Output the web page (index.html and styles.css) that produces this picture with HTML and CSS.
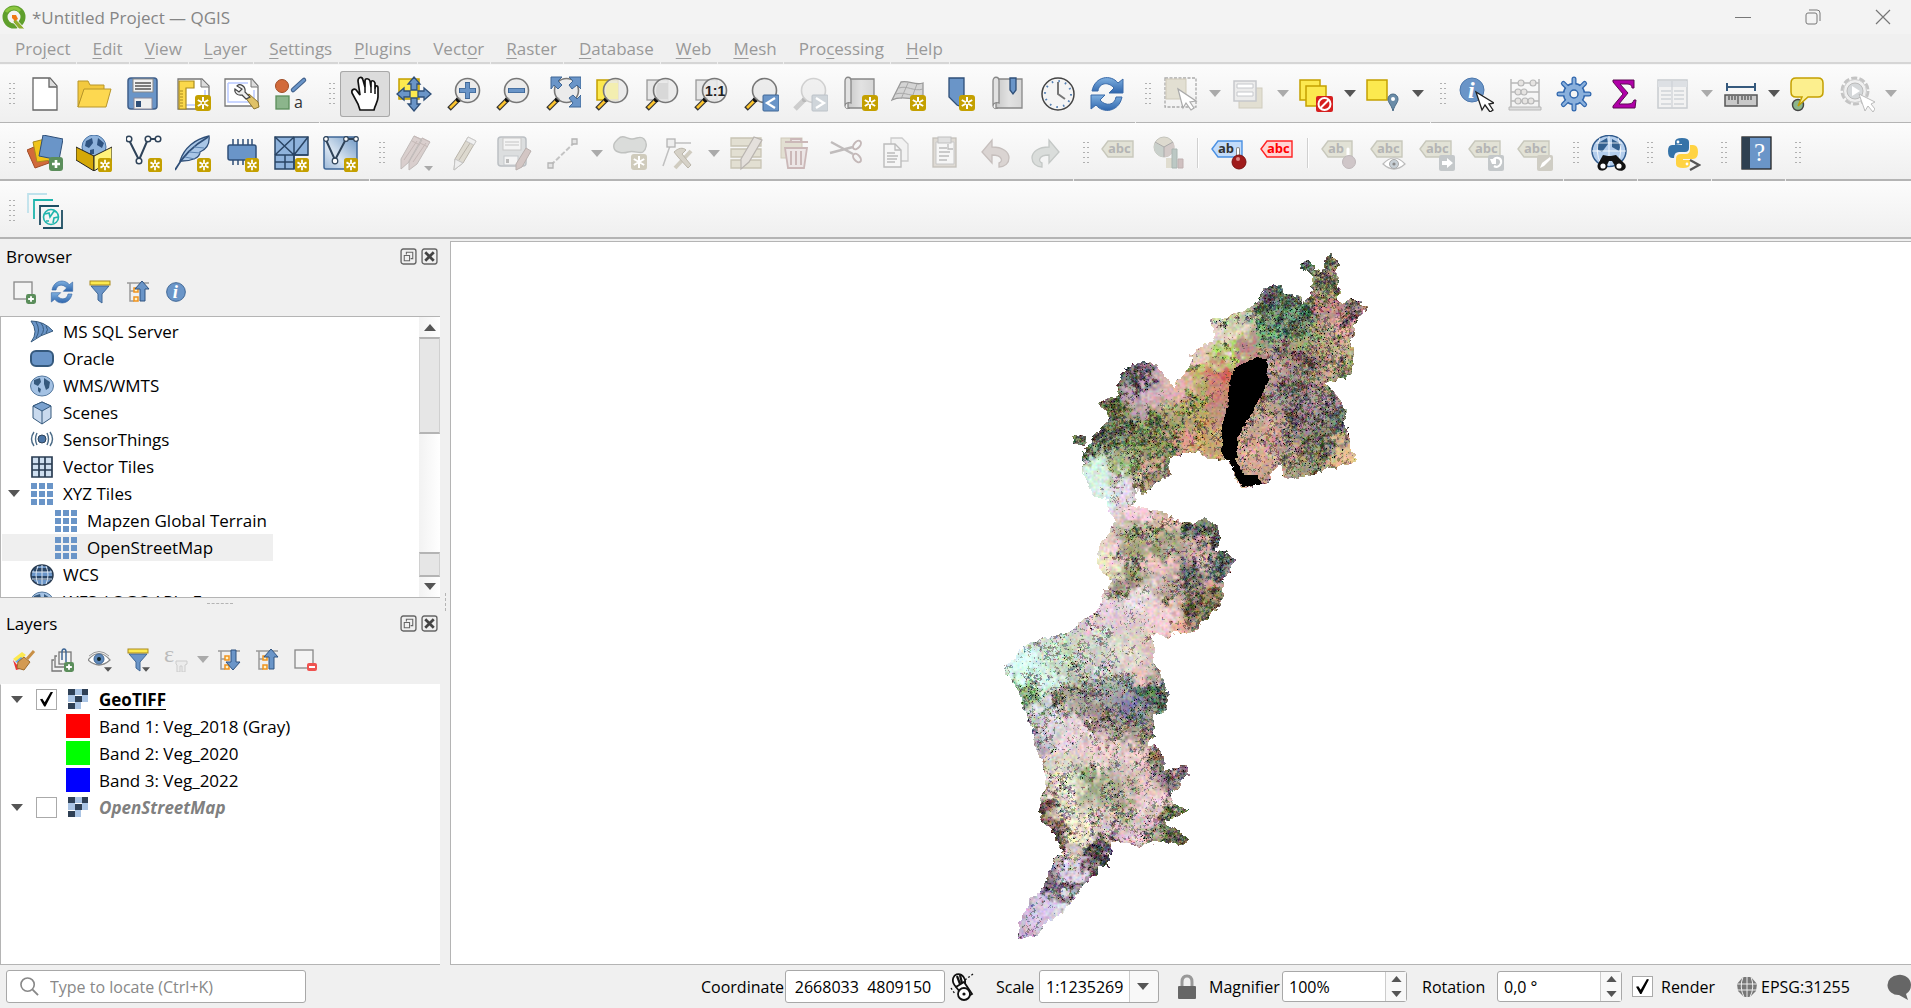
FILE: index.html
```html
<!DOCTYPE html>
<html lang="en">
<head>
<meta charset="utf-8">
<title>*Untitled Project — QGIS</title>
<link rel="stylesheet" href="styles.css">
</head>
<body>
<svg class="paints" aria-hidden="true">
<defs>
<linearGradient id="gBlue" x1="0" y1="0" x2="0" y2="1"><stop offset="0" stop-color="#7fb0e0"/><stop offset="1" stop-color="#2f66ad"/></linearGradient>
<linearGradient id="gPale" x1="1" y1="0" x2="0" y2="1"><stop offset="0" stop-color="#6d97c4"/><stop offset=".6" stop-color="#dbe6f2"/><stop offset="1" stop-color="#9db9d8"/></linearGradient>
<linearGradient id="gGrey" x1="0" y1="0" x2="1" y2="0"><stop offset="0" stop-color="#c8c8c8"/><stop offset=".5" stop-color="#e2e2e2"/><stop offset="1" stop-color="#d6d6d6"/></linearGradient>
</defs>
</svg>
<svg class="symbols" aria-hidden="true">
<symbol id="star" viewBox="0 0 16 16"><rect width="16" height="16" rx="3" fill="#c4a000"/><path d="M8 2v12M2.8 5l10.400 6M13.200 5L2.800 11" stroke="#fff" stroke-width="2"/><circle cx="8" cy="8" r="1.300" fill="#c4a000"/></symbol>
<symbol id="arrow" viewBox="0 0 12 7"><path d="M0 0h12L6 7z" fill="currentColor"/></symbol>
<symbol id="glass" viewBox="0 0 36 36"><path d="M3 33l9-9" stroke="#333" stroke-width="5"/><path d="M4 32l7-7" stroke="#fcc52f" stroke-width="2.600"/><circle cx="12.500" cy="23.500" r="2.600" fill="#111"/><circle cx="21.500" cy="14.500" r="12" fill="#e9e9e9" fill-opacity=".88" stroke="#777" stroke-width="1.600"/></symbol>
<symbol id="pencil" viewBox="0 0 36 36"><path d="M9 24L22 2l8 4-13 22-9 7z" fill="#ddd9cf" stroke="#b9b4aa"/><path d="M20 6l8 4M13 25L26 5" stroke="#b9b4aa" fill="none"/><path d="M22 2l8 4-2 4-8-4z" fill="#f0f0f0" stroke="#ccc"/><path d="M9 24l8 4-9 7z" fill="#eee" stroke="#c4c4c4"/></symbol>
<symbol id="tagbase" viewBox="0 0 36 36"><path d="M1 10l6-8h25v16H7z" fill="#e2e2d6" stroke="#c8c8bc" stroke-width="1.400"/><text x="7" y="14" class="tagtext" fill="#b4b4b4">abc</text></symbol>
<symbol id="tag" viewBox="0 -4 36 36"><use href="#tagbase" width="36" height="36"/></symbol>
<symbol id="doc" viewBox="0 0 36 36"><path d="M6 2h17l7 8v24H6z" fill="#fff" stroke="#666" stroke-width="1.300"/><path d="M22 2v9h8" fill="#ddd" stroke="#666" stroke-width="1.300"/></symbol>
<symbol id="folder" viewBox="0 0 36 36"><path d="M2 31V5h10l2 4h14v6H8z" fill="#f3c93f" stroke="#b8962a"/><path d="M8 13h27l-5 18H2z" fill="#fdd850" stroke="#b8962a"/></symbol>
<symbol id="save" viewBox="0 0 36 36"><rect x="3" y="2" width="29" height="31" rx="3" fill="#6a95c8" stroke="#3f5f8a" stroke-width="1.500"/><rect x="8" y="3" width="20" height="13" fill="#f2f2f2" stroke="#888"/><path d="M10 7h16M10 10h16M10 13h16" stroke="#555" stroke-width="1.400"/><rect x="9" y="22" width="18" height="11" fill="#f0f0f0" stroke="#889"/><rect x="11" y="25" width="5" height="6" fill="#2f4f78"/></symbol>
<symbol id="layout" viewBox="0 0 36 36"><path d="M3 3h24l7 7v23H3z" fill="#fff" stroke="#777" stroke-width="1.300"/><path d="M26 3v8h8" fill="#ddd" stroke="#777"/><path d="M30 14v15H8" fill="none" stroke="#b9c9ff" stroke-width="1.500"/><path d="M4 5h15v7h-8v21H4z" fill="#fbd84b" stroke="#a98a1e" stroke-width="1.200"/><path d="M5 15h3M5 18h3M5 21h3M5 24h3M5 27h3M5 30h3" stroke="#a98a1e"/><use href="#star" x="20" y="19" width="16" height="16"/></symbol>
<symbol id="wrench" viewBox="0 0 36 36"><path d="M1 3h27l6 7v20H1z" fill="#fff" stroke="#777" stroke-width="1.300"/><path d="M27 3v8h7" fill="#ddd" stroke="#777"/><path d="M4 7h20M4 7v19h26V14" fill="none" stroke="#b9c9ff" stroke-width="1.500"/><path d="M21 21l9 12 5-2-1-5-9-8z" fill="#e0c268" stroke="#8b7530"/><path d="M13 10c3-3 9 0 8 6l5 5-4 2-4-4c-4 1-8-2-7-6l4 3 3-3z" fill="#eee" stroke="#444" stroke-width="1.200"/></symbol>
<symbol id="style" viewBox="0 0 36 36"><circle cx="9" cy="10" r="6.500" fill="#d26a3a" stroke="#a04c26"/><path d="M20 14L31 4" stroke="#3f5f8a" stroke-width="4.500" stroke-linecap="round"/><path d="M20 14L31 4" stroke="#6a95c8" stroke-width="2.500" stroke-linecap="round"/><rect x="3" y="20" width="13" height="13" fill="#8cb58c" stroke="#5b8e5b" stroke-width="1.300"/><text x="21" y="32" class="letter">a</text></symbol>
<symbol id="hand" viewBox="0 0 36 36"><path d="M13 34L11 28 5 17C4 13 8 12 10 15L13 19 11 5C11 1 15 0 16 4L18 11 18 5C18 2 22 2 23 5L24 11V7C24 4 27 4 28 7V13C28 9 31 9 31 12V21C31 26 28 29 27 34z" fill="#fff" stroke="#111" stroke-width="1.700"/><path d="M18 11v6M24 11v6M28 13v5" stroke="#111" stroke-width="1.500"/></symbol>
<symbol id="panall" viewBox="0 0 36 36"><rect x="3" y="3" width="20" height="20" fill="#fce94f" stroke="#c4a000" stroke-width="1.500"/><path d="M18 1l6 7h-3v6h-6V8h-3zM18 35l6-7h-3v-6h-6v6h-3zM1 18l7-6v3h6v6H8v3zM35 18l-7-6v3h-6v6h6v3z" fill="#6a95c8" stroke="#2f4f78" stroke-width="1.300"/></symbol>
<symbol id="zin" viewBox="0 0 36 36"><use href="#glass"/><path d="M21.500 6v17M13 14.500h17" stroke="#3f6796" stroke-width="5"/><path d="M21.500 7v15M14 14.500h15" stroke="#6a95c8" stroke-width="3.500"/></symbol>
<symbol id="zout" viewBox="0 0 36 36"><use href="#glass"/><path d="M13 14.500h17" stroke="#3f6796" stroke-width="5"/><path d="M14 14.500h15" stroke="#6a95c8" stroke-width="3.500"/></symbol>
<symbol id="zfull" viewBox="0 0 36 36"><use href="#glass"/><path d="M6 1h11l-4 4 4 4-4 4-4-4-3 4zM36 1v12l-4-4-5 4-3-4 4-4-4-4zM36 31H24l4-4-4-5 4-3 4 4 4-4z" fill="#6a95c8" stroke="#3f6796"/></symbol>
<symbol id="zsel" viewBox="0 0 36 36"><rect x="3" y="4" width="21" height="20" fill="#fce94f" stroke="#c4a000" stroke-width="1.500"/><use href="#glass"/><path d="M14 7h10v16h-10q-4-8 0-16z" fill="#f3eeb0"/></symbol>
<symbol id="zlay" viewBox="0 0 36 36"><rect x="3" y="4" width="21" height="20" fill="#e6e6e6" stroke="#999" stroke-width="1.300"/><use href="#glass"/><path d="M14 7h10v16h-10q-4-8 0-16z" fill="#d8d8d8"/></symbol>
<symbol id="znat" viewBox="0 0 36 36"><rect x="3" y="4" width="21" height="20" fill="#e6e6e6" stroke="#999" stroke-width="1.300"/><use href="#glass"/><text x="12" y="20" class="native">1:1</text></symbol>
<symbol id="zlast" viewBox="0 0 36 36"><use href="#glass"/><rect x="20" y="19" width="16" height="16" rx="1" fill="#6a95c8" stroke="#3f6796"/><path d="M32 22l-8 5 8 5" stroke="#fff" stroke-width="2.300" fill="none"/></symbol>
<symbol id="znext" viewBox="0 0 36 36"><g opacity=".3"><path d="M3 33l9-9" stroke="#777" stroke-width="5"/><circle cx="12.500" cy="23.500" r="2.600" fill="#333"/><circle cx="21.500" cy="14.500" r="12" fill="#e0e0e0" stroke="#777" stroke-width="1.600"/></g><rect x="20" y="19" width="16" height="16" rx="1" fill="#cfd5da" stroke="#bcc2c8"/><path d="M24 22l8 5-8 5" stroke="#fff" stroke-width="2.300" fill="none"/></symbol>
<symbol id="mapnew" viewBox="0 0 36 36"><path d="M6 3h26v29H6z" fill="url(#gGrey)" stroke="#888" stroke-width="1.300"/><path d="M3 5c0-5 6-5 6 0v22c-3-1-6 0-6 3z" fill="#e2e2e2" stroke="#888" stroke-width="1.300"/><path d="M3 30c0 3 3 3 5 2" stroke="#888" fill="none"/></symbol>
<symbol id="scene" viewBox="0 0 36 36"><path d="M1 24L10 6c8-2 14 4 22 1v15c-10 4-20-4-31 2z" fill="#d4d4d4" stroke="#999" stroke-width="1.300"/><path d="M8 12c8-3 15 4 24 1M5 18c8-3 17 4 27 1M17 7l-7 16M26 8l-6 16" stroke="#a8a8a8" fill="none"/></symbol>
<symbol id="bmnew" viewBox="0 0 36 36"><path d="M8 2h15v30l-7-3-8-8z" fill="#6a95c8" stroke="#2f4f78" stroke-width="1.300"/></symbol>
<symbol id="bms" viewBox="0 0 36 36"><use href="#mapnew"/><path d="M20 2h6v12l-3 4-3-4z" fill="#6a95c8" stroke="#2f4f78" stroke-width="1.300"/></symbol>
<symbol id="clock" viewBox="0 0 36 36"><circle cx="18" cy="18" r="16" fill="#f4f4f4" stroke="#444" stroke-width="1.500"/><circle cx="18" cy="18" r="13" fill="none" stroke="#5580b4" stroke-width="2" stroke-dasharray="1.600 5.206"/><path d="M18 6v12l7 5" stroke="#777" stroke-width="2" fill="none"/></symbol>
<symbol id="refresh" viewBox="0 0 36 36"><path d="M3 15C6 0 22-2 29 7l5-4v14H20l5-5c-6-7-15-5-16 3z" fill="url(#gBlue)" stroke="#3a6aa8"/><path d="M33 21C30 36 14 38 7 29l-5 4V19h14l-5 5c6 7 15 5 16-3z" fill="url(#gBlue)" stroke="#3a6aa8"/></symbol>
<symbol id="select" viewBox="0 0 36 36"><rect x="2" y="2" width="31" height="29" fill="none" stroke="#aaa" stroke-width="1.300" stroke-dasharray="3 1.500"/><rect x="3" y="3" width="20" height="20" fill="#e2dfd2" stroke="#cfcaba"/><path d="M15 13l5 19 3-5 5 7 3-2-4-6 6-1z" fill="#fff" stroke="#aaa" stroke-width="1.200"/></symbol>
<symbol id="form" viewBox="0 0 36 36"><rect x="8" y="12" width="23" height="20" fill="#e2dfd2" stroke="#d0ccbe"/><rect x="3" y="5" width="22" height="20" fill="#ececec" stroke="#c6c8cc" stroke-width="1.500"/><path d="M6 8h16v4H6zM6 16h16v4H6z" fill="#fff" stroke="#c6c8cc"/></symbol>
<symbol id="desel" viewBox="0 0 36 36"><rect x="2" y="4" width="20" height="20" fill="#fce94f" stroke="#c4a000" stroke-width="1.500"/><rect x="8" y="10" width="20" height="20" fill="#fce94f" stroke="#c4a000" stroke-width="1.500"/><rect x="18" y="20" width="17" height="16" rx="2" fill="#d61f1f"/><circle cx="26.500" cy="28" r="6" fill="none" stroke="#fff" stroke-width="2"/><path d="M22.500 32l8-8" stroke="#fff" stroke-width="2"/></symbol>
<symbol id="selloc" viewBox="0 0 36 36"><rect x="1" y="4" width="20" height="20" fill="#fce94f" stroke="#c4a000" stroke-width="1.500"/><path d="M27 35c-2-7-5-8-5-12a5 5 0 0 1 10 0c0 4-3 5-5 12z" fill="#6a8ca8" stroke="#4a6a86"/><circle cx="27" cy="23" r="2" fill="#fff"/></symbol>
<symbol id="info" viewBox="0 0 36 36"><circle cx="18" cy="18" r="14" fill="#6a95c8" stroke="#3f6796" stroke-width="1.500"/><text x="13" y="27" class="infoi">i</text></symbol>
<symbol id="identify" viewBox="0 0 36 36"><circle cx="14" cy="14" r="12" fill="#6a95c8" stroke="#4d78ad"/><text x="10" y="22" class="infos">i</text><path d="M18 16l6 18 3-5 5 7 3-2-4-6 5-1z" fill="#fff" stroke="#222" stroke-width="1.300"/></symbol>
<symbol id="abacus" viewBox="0 0 36 36"><path d="M4 3v29M32 3v29M4 7h28M4 16h28M4 25h28" stroke="#b8b8b8" stroke-width="1.500"/><path d="M2 31h32v3H2z" fill="#ddd" stroke="#b8b8b8"/><g fill="#e6e4e2" stroke="#b8b8b8" stroke-width="1.200"><circle cx="14" cy="7" r="3"/><circle cx="26" cy="7" r="3"/><circle cx="11" cy="16" r="3"/><circle cx="17" cy="16" r="3"/><circle cx="11" cy="25" r="3"/><circle cx="18" cy="25" r="3"/><circle cx="24" cy="25" r="3"/></g></symbol>
<symbol id="gear" viewBox="0 0 36 36"><path d="M18 3v30M3 18h30M7.400 7.400l21.200 21.200M28.600 7.400L7.400 28.600" stroke="#2f66ad" stroke-width="5" stroke-linecap="round"/><circle cx="18" cy="18" r="10.500" fill="#8ab0dc" stroke="#2f66ad" stroke-width="1.500"/><path d="M18 3v30M3 18h30M7.400 7.400l21.200 21.200M28.600 7.400L7.400 28.600" stroke="#8ab0dc" stroke-width="2.600" stroke-linecap="round"/><circle cx="18" cy="18" r="4" fill="#f4f4f4" stroke="#2f66ad" stroke-width="1.500"/></symbol>
<symbol id="sigma" viewBox="0 0 36 36"><path d="M7 4h21v8h-2c0-3-2-4-5-4h-7l8 9-9 11h9c3 0 5-1 6-4h2l-1 8H7v-2l10-12L7 6z" fill="#b000a8" stroke="#5c0a52"/></symbol>
<symbol id="attrs" viewBox="0 0 36 36"><rect x="3" y="4" width="29" height="28" fill="#f2f2f2" stroke="#c8ccd0" stroke-width="1.500"/><path d="M3 5h29v6H3z" fill="#dde0e4"/><path d="M6 15h10M19 15h10M6 19h10M19 19h10M6 23h10M19 23h10M6 28h10M19 28h10M17 5v27" stroke="#cfd3d7" stroke-width="1.300"/></symbol>
<symbol id="ruler" viewBox="0 0 36 36"><path d="M4 11h28M4 7v8M32 7v8" stroke="#35597d" stroke-width="2"/><rect x="2" y="19" width="32" height="11" fill="#c9c9c9" stroke="#555" stroke-width="1.500"/><path d="M6 20v4M9 20v4M12 20v4M15 20v8M19 20v4M22 20v4M25 20v4M28 20v4" stroke="#555" stroke-width="1.300"/></symbol>
<symbol id="tips" viewBox="0 0 36 36"><circle cx="8" cy="29" r="5.500" fill="#8cb58c" stroke="#444" stroke-width="1.400"/><path d="M6 2h22q5 0 5 5v9q0 5-5 5H18l-10 9 4-9H6q-5 0-5-5V7q0-5 5-5z" fill="#fcef8e" stroke="#c4a000" stroke-width="1.500"/></symbol>
<symbol id="action" viewBox="0 0 36 36"><circle cx="16" cy="15" r="13" fill="none" stroke="#c4c4c4" stroke-width="3" stroke-dasharray="6 2.160"/><circle cx="16" cy="15" r="11.500" fill="#f0f0f0" stroke="#ccc"/><circle cx="16" cy="15" r="8" fill="#d5d8da" stroke="#bbb"/><path d="M13 10l8 5-8 5z" fill="#fff"/><path d="M20 18l6 17 3-5 5 6 2-3-4-5 4-2z" fill="#fff" stroke="#bbb"/></symbol>
<symbol id="plus" viewBox="0 0 14 14"><rect width="14" height="14" rx="3" fill="#5b8e5b"/><path d="M7 3v8M3 7h8" stroke="#fff" stroke-width="2.600"/></symbol>
<symbol id="source" viewBox="0 0 36 36"><path d="M0 15l14-6 8 19-14 5z" fill="#d26a3a" stroke="#a04c26"/><path d="M6 7l12-3 6 21-14 2z" fill="#f0c419" stroke="#a98a1e"/><path d="M16 0l20 4-4 21-20-4z" fill="#6a95c8" stroke="#2f4f78"/><use href="#plus" x="22" y="22" width="14" height="14"/></symbol>
<symbol id="geopkg" viewBox="0 0 36 36"><circle cx="18" cy="12" r="12" fill="#8fb3dc" stroke="#4b75a6"/><path d="M10 6l6-3 1 5-4 5-4-2zM22 3l6 5-2 5-5-3zM14 15l4-1v5h-4z" fill="#2f5380"/><path d="M0 12l18 9v15L0 25z" fill="#d5a806" stroke="#222"/><path d="M36 12l-18 9v15l18-11z" fill="#fff27a" stroke="#222"/></symbol>
<symbol id="shape" viewBox="0 0 36 36"><path d="M3 5l10 20L22 4h10" fill="none" stroke="#2f4359" stroke-width="2"/><g fill="#fff" stroke="#2f4359" stroke-width="1.500"><circle cx="3" cy="4" r="2.800"/><circle cx="13" cy="26" r="2.800"/><circle cx="22" cy="4" r="2.800"/><circle cx="32" cy="4" r="2.800"/></g></symbol>
<symbol id="feather" viewBox="0 0 36 36"><path d="M5 26C9 13 20 4 34 1c1 9-4 14-9 16 0 6-9 9-18 9z" fill="#a9c6e6" stroke="#2f4f78" stroke-width="1.300"/><path d="M0 35C7 22 16 12 33 2" fill="none" stroke="#2f4f78" stroke-width="1.800"/><path d="M10 22l10 2M14 17l11 1M19 12l10 1" stroke="#5d85b2"/></symbol>
<symbol id="chip" viewBox="0 0 36 36"><path d="M9 4v7M14 4v7M19 4v7M24 4v7M28 4v7M9 25v5M14 25v5M19 25v5" stroke="#2f4f78" stroke-width="1.500"/><rect x="4" y="10" width="28" height="15" rx="2" fill="#6a95c8" stroke="#2f4f78" stroke-width="1.500"/></symbol>
<symbol id="mesh" viewBox="0 0 36 36"><path d="M1 2h33v18H20v14H1z" fill="#8fb3dc" stroke="#2a4565" stroke-width="1.500"/><path d="M1 20h33M20 2v32M1 2l19 18M20 2L1 20M34 2L20 20M11 20v14M1 27h19" stroke="#2a4565" stroke-width="1.500"/></symbol>
<symbol id="vlayer" viewBox="0 0 36 36"><rect x="1" y="2" width="33" height="32" rx="2" fill="url(#gPale)" stroke="#3f6796" stroke-width="1.500"/><path d="M3 5l9 20L23 4h9" fill="none" stroke="#2f4359" stroke-width="2"/><g fill="#fff" stroke="#2f4359" stroke-width="1.200"><circle cx="3" cy="4" r="2.300"/><circle cx="12" cy="26" r="2.800"/><circle cx="23" cy="4" r="2.300"/><circle cx="33" cy="4" r="2.300"/></g></symbol>
<symbol id="pencils" viewBox="0 0 36 36"><g opacity=".8"><path d="M4 24L17 1l8 4-13 22-8 7zM12 26L25 3l8 4-13 22-8 6z" fill="#d3c6c4" stroke="#b4adab"/><path d="M17 1l7 3M15 6l8 4M25 3l8 4M23 8l8 4M7 25L20 6M16 27L29 8" stroke="#b9a9a7" fill="none"/></g><path d="M27 31h9l-4 5z" fill="#aaa"/></symbol>
<symbol id="saveed" viewBox="0 0 36 36"><rect x="2" y="2" width="28" height="29" rx="3" fill="#dcdedf" stroke="#bcc0c4" stroke-width="1.500"/><rect x="7" y="3" width="18" height="12" fill="#f4f4f4" stroke="#c8c8c8"/><path d="M9 7h14M9 10h14" stroke="#c4c4c4"/><rect x="8" y="21" width="14" height="9" fill="#f4f4f4" stroke="#c4c8cc"/><path d="M10 24h3v4h-3z" fill="#bbb"/><path d="M20 29L30 13l5 3-9 16-6 3z" fill="#d3c6c4" stroke="#b9b0ae"/></symbol>
<symbol id="line" viewBox="0 0 36 36"><path d="M6 30L30 7" stroke="#c4c4c4" stroke-width="2" stroke-dasharray="5 2"/><path d="M3 28h5v5H3zM27 4h5v5h-5z" fill="#e4e4e4" stroke="#b4b4b4" stroke-width="1.300"/></symbol>
<symbol id="starg" viewBox="0 0 16 16"><rect width="16" height="16" rx="3" fill="#cfcbbc"/><path d="M8 2v12M2.800 5l10.400 6M13.200 5L2.800 11" stroke="#fff" stroke-width="2"/></symbol>
<symbol id="blob" viewBox="0 0 36 36"><path d="M5 4c5-5 9 0 14 0s8-4 12 0 2 11-1 13-9-2-15 0S2 17 1 13s1-6 4-9z" fill="#dadcda" stroke="#c0c2c0" stroke-width="1.400"/><use href="#starg" x="18" y="19" width="16" height="16"/></symbol>
<symbol id="vertex" viewBox="0 0 36 36"><path d="M1 31L9 8h20" stroke="#c0c0c0" stroke-width="1.500" fill="none"/><rect x="5" y="4" width="8" height="8" fill="#eee" stroke="#b4b4b4" stroke-width="1.300"/><path d="M13 33l16-17" stroke="#d0ccc0" stroke-width="4"/><path d="M12 17c4-4 9-5 12-2l-4 4 9 11-3 3-10-11z" fill="#d6d2c8" stroke="#bbb6aa"/></symbol>
<symbol id="fields" viewBox="0 0 36 36"><path d="M1 3h30v8H1zM1 14h30v8H1zM1 25h30v8H1z" fill="#e2dfd2" stroke="#c8c4b4" stroke-width="1.300"/><path d="M11 24L24 2l8 3-13 22-8 7z" fill="#e4e0dc" stroke="#b9b4b0" stroke-width="1.200"/></symbol>
<symbol id="trash" viewBox="0 0 36 36"><rect x="2" y="3" width="21" height="20" fill="#e2dfd2" stroke="#cfcaba"/><path d="M6 7h23M12 6V4h10v2M6 13h22l-3 20H9z" fill="#ece6e6" stroke="#cbb8b8" stroke-width="1.800"/><path d="M12 16v14M17 16v14M22 16v14" stroke="#cbb8b8" stroke-width="2"/></symbol>
<symbol id="cut" viewBox="0 0 36 36"><path d="M2 7l22 12M1 18l23-6" stroke="#c0bcbc" stroke-width="2.500"/><ellipse cx="28" cy="10" rx="3" ry="5" transform="rotate(40 28 10)" fill="none" stroke="#c4b8b8" stroke-width="2"/><ellipse cx="28" cy="23" rx="3" ry="5" transform="rotate(-40 28 23)" fill="none" stroke="#c4b8b8" stroke-width="2"/></symbol>
<symbol id="copy" viewBox="0 0 36 36"><path d="M12 3h11l6 6v17H12z" fill="#f2f2f2" stroke="#ccc" stroke-width="1.300"/><path d="M5 9h11l6 6v17H5z" fill="#f6f6f6" stroke="#bcbcbc" stroke-width="1.400"/><path d="M16 9v6h6M8 18h8M8 21h11M8 24h10M8 27h8" stroke="#bcbcbc" stroke-width="1.300" fill="none"/></symbol>
<symbol id="paste" viewBox="0 0 36 36"><rect x="5" y="3" width="23" height="29" fill="#dedad4" stroke="#c4c0ba" stroke-width="1.300"/><path d="M8 7h18v22H8z" fill="#f6f6f6" stroke="#c8c8c8"/><rect x="10" y="2" width="13" height="6" fill="#e0e0e0" stroke="#c0c0c0"/><path d="M11 13h8M11 17h11M11 21h10M11 25h8M20 9v5h5" stroke="#bcbcbc" stroke-width="1.300" fill="none"/></symbol>
<symbol id="undo" viewBox="0 0 36 36"><path d="M4 17L14 5v7c11 0 17 5 17 11 0 5-4 9-10 9v-4c4-1 4-8-7-8v8z" fill="#dad4d2" stroke="#c6bfbd" stroke-width="1.300"/></symbol>
<symbol id="redo" viewBox="0 0 36 36"><path d="M32 17L22 5v7C11 12 5 17 5 23c0 5 4 9 10 9v-4c-4-1-4-8 7-8v8z" fill="#dadddb" stroke="#c4c8c6" stroke-width="1.300"/></symbol>
<symbol id="diagram" viewBox="0 0 36 36"><circle cx="14" cy="12" r="10" fill="#dddacf" stroke="#c4c4bc"/><path d="M14 12v10a10 10 0 0 1-9-14z" fill="#c9d0cb"/><path d="M14 12l9-5a10 10 0 0 1-9 15z" fill="#d3cac8"/><path d="M14 12v10M14 12L5 7M14 12l9-5" stroke="#aaa"/><path d="M16 23h6v10h-6z" fill="#e0ddd0"/><path d="M22 14h5v19h-5z" fill="#bcc8c4" stroke="#aab6b2"/><path d="M28 24h5v9h-5z" fill="#cfc0c0" stroke="#bfb0b0"/></symbol>
<symbol id="pinab" viewBox="0 -2 36 36"><path d="M1 12l6-8h24v16H7z" fill="#c3dcfa" stroke="#4a90e2" stroke-width="1.400"/><text x="7" y="16" class="tagtext" fill="#333">ab</text><path d="M27 12v10" stroke="#888" stroke-width="4" stroke-linecap="round"/><path d="M27 12v9" stroke="#fff" stroke-width="2" stroke-linecap="round"/><circle cx="28" cy="25" r="7" fill="#a01c1c" stroke="#7a1010"/><circle cx="27" cy="22" r="2" fill="#d88"/></symbol>
<symbol id="redabc" viewBox="0 -2 36 36"><path d="M1 12l6-8h25v16H7z" fill="#ffd5d5" stroke="#f22" stroke-width="1.400"/><text x="7" y="16" class="tagtext" fill="#f00">abc</text></symbol>
<symbol id="pinoff" viewBox="0 -4 36 36"><path d="M1 10l6-8h24v16H7z" fill="#e2e2d6" stroke="#c8c8bc" stroke-width="1.400"/><text x="7" y="14" class="tagtext" fill="#b4b4b4">ab</text><path d="M27 10v9" stroke="#fff" stroke-width="3" stroke-linecap="round"/><circle cx="28" cy="23" r="6.500" fill="#cfc6c8" stroke="#bfb8ba"/></symbol>
<symbol id="eyeoff" viewBox="0 -4 36 36"><use href="#tagbase" width="36" height="36"/><path d="M13 25q11-12 22 0-11 10-22 0z" fill="#fff" stroke="#bbb" stroke-width="1.200"/><circle cx="24" cy="25" r="4.500" fill="#c8d0d6" stroke="#aaa"/><circle cx="24" cy="25" r="1.600" fill="#888"/></symbol>
<symbol id="moveoff" viewBox="0 -4 36 36"><use href="#tagbase" width="36" height="36"/><rect x="20" y="16" width="16" height="16" rx="2" fill="#c4c8ca"/><path d="M23 22h5v-3l6 5-6 5v-3h-5z" fill="#fff"/></symbol>
<symbol id="rotoff" viewBox="0 -4 36 36"><use href="#tagbase" width="36" height="36"/><rect x="20" y="16" width="16" height="16" rx="2" fill="#c4c8ca"/><path d="M25 22c1-5 9-4 8 2-1 3-4 5-7 3" stroke="#fff" stroke-width="2.200" fill="none"/><path d="M22 20h6v5h-4z" fill="#fff"/></symbol>
<symbol id="editoff" viewBox="0 -4 36 36"><use href="#tagbase" width="36" height="36"/><rect x="20" y="16" width="16" height="16" rx="2" fill="#cfcdc4"/><path d="M23 29l2-5 8-6 1 2-7 7z" fill="#fff"/></symbol>
<symbol id="metaglobe" viewBox="0 0 36 36"><ellipse cx="18" cy="16" rx="17" ry="15.500" fill="#b3cdec" stroke="#2f5a8c" stroke-width="1.500"/><path d="M7 8l9-5 1 6-6 8-5-3zM21 4l9 5-2 7-7-4z" fill="#33608f"/><path d="M18 1v30M1 16h34M5 8h26M9 3q-6 13 1 26M27 3q6 13-1 26" stroke="#fff" stroke-width=".8" fill="none"/><path d="M12 20l5 1h3l5-1 9 9c3 5-4 9-8 5l-5-8h-3l-4 8c-5 4-9-1-7-5z" fill="#111"/><circle cx="12" cy="31" r="3.500" fill="#fff" stroke="#111" stroke-width="1.800"/><circle cx="28" cy="31" r="3.500" fill="#fff" stroke="#111" stroke-width="1.800"/></symbol>
<symbol id="python" viewBox="0 0 36 36"><path d="M10 10V7q0-4 7-4t7 4v6q0 4-4 4h-6q-5 0-5 6H7q-4 0-4-7 0-6 4-6h10V9z" fill="#3573a8"/><path d="M25 10h3q5 0 5 7t-5 7H18v1h7v4q0 4-7 4t-7-4v-5q0-5 5-5h5q4 0 4-5z" fill="#ffd343"/><circle cx="13" cy="7" r="1.400" fill="#fff"/><circle cx="22" cy="29" r="1.400" fill="#fff"/><path d="M25 25l9 5-9 5" stroke="#555" stroke-width="2.200" fill="none"/></symbol>
<symbol id="help" viewBox="0 0 36 36"><rect x="3" y="2" width="29" height="32" fill="#6a95c8" stroke="#222" stroke-width="1.300"/><path d="M3 2h8v32H3z" fill="#2f4050"/><text x="15" y="26" class="question">?</text></symbol>
<symbol id="plugin" viewBox="0 0 36 36"><path d="M1 20V1h19" fill="none" stroke="#bfe2ec" stroke-width="1.800"/><path d="M7 26V7h19" fill="none" stroke="#1fb5ad" stroke-width="1.800"/><path d="M13 32V13h19M16 35h19V17" fill="none" stroke="#1d4e63" stroke-width="1.800"/><circle cx="24" cy="24" r="7.500" fill="none" stroke="#1fb5ad" stroke-width="1.600"/><path d="M18 21l4-1 1 4 4-6 2 1M19 28l3 0M31 24l-4 1-1 5" fill="none" stroke="#1fb5ad" stroke-width="1.600"/></symbol>
<symbol id="funnel" viewBox="0 0 24 24"><path d="M3 6h18l-7 8v9l-4-3v-6z" fill="#6a95c8" stroke="#3f6796"/><rect x="2" y="1" width="20" height="4" fill="#fce94f" stroke="#a98a1e"/></symbol>
<symbol id="addlay" viewBox="0 0 24 24"><rect x="2" y="2" width="18" height="17" fill="#f4f4f4" stroke="#888" stroke-width="1.300"/><use href="#plus" x="14" y="14" width="10" height="10"/></symbol>
<symbol id="remlay" viewBox="0 0 24 24"><rect x="2" y="2" width="18" height="18" fill="#f4f4f4" stroke="#888" stroke-width="1.300"/><rect x="14" y="15" width="10" height="8" rx="2" fill="#ef5350"/><path d="M16 19h6" stroke="#fff" stroke-width="2"/></symbol>
<symbol id="tree" viewBox="0 0 24 24"><path d="M1 3h22M4 3v18h4M4 11h4" stroke="#999" stroke-width="1.500" fill="none"/><path d="M8 8h4v4H8zM8 17h4v4H8z" fill="#fff3c4" stroke="#f0921e" stroke-width="1.500"/></symbol>
<symbol id="collapse" viewBox="0 0 24 24"><use href="#tree"/><path d="M16 1l7 8h-4v12h-5V9H9z" fill="#6a95c8" stroke="#2f5380"/></symbol>
<symbol id="expand" viewBox="0 0 24 24"><use href="#tree"/><path d="M16 22l7-8h-4V2h-5v12H9z" fill="#6a95c8" stroke="#2f5380"/></symbol>
<symbol id="brush" viewBox="0 0 24 24"><path d="M1 11l9-7 4 3-9 7z" fill="#fce94f"/><path d="M3 14l6-5 6 5-3 3z" fill="#6aa5e8"/><path d="M1 12l5 6 6 2-8 2z" fill="#e33"/><path d="M6 14l6-5 6 5-6 8-7-2z" fill="#d39a52" stroke="#9c6b2c"/><path d="M15 11l7-8" stroke="#c88f45" stroke-width="3"/></symbol>
<symbol id="group" viewBox="0 0 24 24"><path d="M4 12H2v11h10M7 8H5v11h10" fill="none" stroke="#777" stroke-width="1.300"/><rect x="9" y="4" width="12" height="12" fill="#f4f4f4" stroke="#777" stroke-width="1.300"/><path d="M12 12V4q0-3 2-3t2 3v10" stroke="#3f6796" stroke-width="1.500" fill="none"/><use href="#plus" x="14" y="14" width="10" height="10"/></symbol>
<symbol id="eye" viewBox="0 0 24 24"><path d="M0 12q11-13 22 0-11 10-22 0z" fill="#fff" stroke="#888" stroke-width="1.200"/><path d="M1 8q10-9 20 0" fill="none" stroke="#999"/><circle cx="11" cy="11" r="5" fill="#5f88b8" stroke="#3f6796"/><circle cx="11" cy="11" r="2" fill="#122"/></symbol>
<symbol id="eps" viewBox="0 0 24 24"><text x="0" y="14" class="eps">ε</text><path d="M12 13h11v3l-2 1v7h-3v-6h-2v6h-3v-7l-1-1z" fill="#ececec" stroke="#ccc"/></symbol>
<symbol id="mssql" viewBox="0 0 24 24"><path d="M1 1q13 0 22 10Q10 15 1 22 9 12 1 1z" fill="#6a95c8" stroke="#35597d"/><path d="M6 2q5 8 0 16M11 3q5 7 0 12M16 6q3 4 0 7" stroke="#35597d" fill="none"/></symbol>
<symbol id="oracle" viewBox="0 0 24 24"><rect x="1" y="4" width="22" height="15" rx="5" fill="#6a95c8" stroke="#35597d" stroke-width="2"/></symbol>
<symbol id="wms" viewBox="0 0 24 24"><ellipse cx="12" cy="12" rx="11.500" ry="10" fill="#a4c2e4" stroke="#55799f"/><path d="M4 6l6-2 1 4-3 4-4-2zM14 4l6 4-1 6-3 2-2-6zM8 13l3 2-1 4-2-2z" fill="#35597d"/></symbol>
<symbol id="cube" viewBox="0 0 24 24"><path d="M12 1l9 4v12l-9 6-9-6V5z" fill="#c9daee" stroke="#35597d"/><path d="M12 1l9 4-9 5-9-5z" fill="#7ba2cf" stroke="#35597d"/><path d="M12 10v13" stroke="#35597d"/></symbol>
<symbol id="sensor" viewBox="0 0 24 24"><circle cx="12" cy="11" r="4" fill="#4b75a6" stroke="#2f4359"/><path d="M7 5q-3 6 0 12M4 4q-5 7 0 14M17 5q3 6 0 12M20 4q5 7 0 14" stroke="#4a6a86" stroke-width="1.400" fill="none"/></symbol>
<symbol id="vtiles" viewBox="0 0 24 24"><path d="M2 2h20v20H2z" fill="#cfdff0" stroke="#2a3c52" stroke-width="1.700"/><path d="M9 2v20M15 2v20M2 9h20M2 15h20" stroke="#2a3c52" stroke-width="1.700"/></symbol>
<symbol id="xyz" viewBox="0 0 24 24"><path d="M1 1h6v6H1zM9 1h6v6H9zM17 1h6v6h-6zM1 9h6v6H1zM9 9h6v6H9zM17 9h6v6h-6zM1 17h6v6H1zM9 17h6v6H9zM17 17h6v6h-6z" fill="#6a95c8"/></symbol>
<symbol id="wcs" viewBox="0 0 24 24"><ellipse cx="12" cy="12" rx="11" ry="10" fill="#6a95c8" stroke="#2a3c52" stroke-width="1.500"/><path d="M4 5h16v4H4zM2 13h20v4H3z" fill="#2a4565"/><path d="M12 2v20M2 9h20M2 16h20M8 3q-4 9 0 18M16 3q4 9 0 18" stroke="#dbe6f2" fill="none"/></symbol>
<symbol id="raster" viewBox="0 0 24 24"><path d="M2 2h20v20H2z" fill="#fff"/><path d="M9 2h7v6H9zM2 8h7v7H2zM16 8h6v7h-6zM9 15h6v7H9z" fill="#aac4e4"/><path d="M2 2h7v6H2zM16 2h6v6h-6zM9 9h7v6H9zM2 16h7v6H2z" fill="#2f4055"/></symbol>
<symbol id="float" viewBox="0 0 16 16"><rect x="1" y="1" width="14" height="14" rx="2" fill="none" stroke="#666" stroke-width="1.300"/><path d="M6 6V4h6v6h-2M4 7h5v5H4z" fill="none" stroke="#666"/></symbol>
<symbol id="closex" viewBox="0 0 16 16"><rect x="1" y="1" width="14" height="14" rx="2" fill="none" stroke="#666" stroke-width="1.300"/><path d="M4 4l8 8M12 4l-8 8" stroke="#444" stroke-width="2.600"/></symbol>
</svg>

<header class="titlebar">
  <svg class="logo" viewBox="0 0 24 24"><circle cx="12" cy="12" r="9" fill="none" stroke="#5f9f2c" stroke-width="5"/><path d="M4 7a9 9 0 0 1 14-1" fill="none" stroke="#8cc63f" stroke-width="3"/><path d="M12 12l11 12h-6L11 17z" fill="#8fae2d" stroke="#f2f2f2"/><path d="M10 10h4l2 4-3 2-3-3z" fill="#ee7913"/></svg>
  <h1 class="title">*Untitled Project — QGIS</h1>
  <div class="winbtns">
    <button aria-label="Minimize"><svg viewBox="0 0 16 16"><path d="M0 8.500h16" stroke="#777"/></svg></button>
    <button aria-label="Restore"><svg viewBox="0 0 16 16"><rect x="1" y="4" width="11" height="11" rx="2" fill="none" stroke="#777"/><path d="M4 1h8q3 0 3 3v8" fill="none" stroke="#777"/></svg></button>
    <button aria-label="Close"><svg viewBox="0 0 16 16"><path d="M1 1l14 14M15 1L1 15" stroke="#777" stroke-width="1.200"/></svg></button>
  </div>
</header>

<nav class="menubar">
  <button>Pro<u>j</u>ect</button><button><u>E</u>dit</button><button><u>V</u>iew</button><button><u>L</u>ayer</button><button><u>S</u>ettings</button><button><u>P</u>lugins</button><button>Vect<u>o</u>r</button><button><u>R</u>aster</button><button><u>D</u>atabase</button><button><u>W</u>eb</button><button><u>M</u>esh</button><button>Pro<u>c</u>essing</button><button><u>H</u>elp</button><span class="rest"></span>
</nav>

<div class="toolbar">
  <section class="group">
    <i class="grip"></i>
    <div class="tools w6">
      <button><svg><use href="#doc"/></svg></button><button><svg><use href="#folder"/></svg></button><button><svg><use href="#save"/></svg></button><button><svg><use href="#layout"/></svg></button><button><svg><use href="#wrench"/></svg></button><button><svg><use href="#style"/></svg></button>
    </div>
  </section>
  <section class="group">
    <i class="grip"></i>
    <div class="tools w16">
      <button class="pressed"><svg><use href="#hand"/></svg></button><button><svg><use href="#panall"/></svg></button><button><svg><use href="#zin"/></svg></button><button><svg><use href="#zout"/></svg></button><button><svg><use href="#zfull"/></svg></button><button><svg><use href="#zsel"/></svg></button><button><svg><use href="#zlay"/></svg></button><button><svg><use href="#znat"/></svg></button><button><svg><use href="#zlast"/></svg></button><button><svg><use href="#znext"/></svg></button><button><svg><use href="#mapnew"/><use href="#star" x="20" y="19" width="16" height="16"/></svg></button><button><svg><use href="#scene"/><use href="#star" x="19" y="19" width="16" height="16"/></svg></button><button><svg><use href="#bmnew"/><use href="#star" x="18" y="19" width="16" height="16"/></svg></button><button><svg><use href="#bms"/></svg></button><button><svg><use href="#clock"/></svg></button><button><svg><use href="#refresh"/></svg></button>
    </div>
  </section>
  <section class="group">
    <i class="grip"></i>
    <div class="tools combos">
      <button><svg><use href="#select"/></svg></button><button class="drop off"><svg><use href="#arrow"/></svg></button><button><svg><use href="#form"/></svg></button><button class="drop off"><svg><use href="#arrow"/></svg></button><button><svg><use href="#desel"/></svg></button><button class="drop"><svg><use href="#arrow"/></svg></button><button><svg><use href="#selloc"/></svg></button><button class="drop"><svg><use href="#arrow"/></svg></button>
    </div>
  </section>
  <section class="group last">
    <i class="grip"></i>
    <div class="tools attrs">
      <button><svg><use href="#identify"/></svg></button><button><svg><use href="#abacus"/></svg></button><button><svg><use href="#gear"/></svg></button><button><svg><use href="#sigma"/></svg></button><button><svg><use href="#attrs"/></svg></button><button class="drop off"><svg><use href="#arrow"/></svg></button><button><svg><use href="#ruler"/></svg></button><button class="drop"><svg><use href="#arrow"/></svg></button><button><svg><use href="#tips"/></svg></button><button><svg><use href="#action"/></svg></button><button class="drop off"><svg><use href="#arrow"/></svg></button>
    </div>
  </section>
</div>

<div class="toolbar thick">
  <section class="group">
    <i class="grip"></i>
    <div class="tools w7">
      <button><svg><use href="#source"/></svg></button><button><svg><use href="#geopkg"/><use href="#star" x="22" y="23" width="14" height="14"/></svg></button><button><svg><use href="#shape"/><use href="#star" x="22" y="23" width="14" height="14"/></svg></button><button><svg><use href="#feather"/><use href="#star" x="22" y="23" width="14" height="14"/></svg></button><button><svg><use href="#chip"/><use href="#star" x="21" y="23" width="14" height="14"/></svg></button><button><svg><use href="#mesh"/><use href="#star" x="21" y="23" width="14" height="14"/></svg></button><button><svg><use href="#vlayer"/><use href="#star" x="21" y="23" width="14" height="14"/></svg></button>
    </div>
  </section>
  <section class="group">
    <i class="grip"></i>
    <div class="tools w13">
      <button><svg><use href="#pencils"/></svg></button><button><svg><use href="#pencil"/></svg></button><button><svg><use href="#saveed"/></svg></button><button><svg><use href="#line"/></svg></button><button class="drop off"><svg><use href="#arrow"/></svg></button><button><svg><use href="#blob"/></svg></button><button><svg><use href="#vertex"/></svg></button><button class="drop off"><svg><use href="#arrow"/></svg></button><button><svg><use href="#fields"/></svg></button><button><svg><use href="#trash"/></svg></button><button><svg><use href="#cut"/></svg></button><button><svg><use href="#copy"/></svg></button><button><svg><use href="#paste"/></svg></button><button><svg><use href="#undo"/></svg></button><button><svg><use href="#redo"/></svg></button>
    </div>
  </section>
  <section class="group">
    <i class="grip"></i>
    <div class="tools w9">
      <button><svg><use href="#tag"/></svg></button><button><svg><use href="#diagram"/></svg></button><i class="sep"></i><button><svg><use href="#pinab"/></svg></button><button><svg><use href="#redabc"/></svg></button><i class="sep"></i><button><svg><use href="#pinoff"/></svg></button><button><svg><use href="#eyeoff"/></svg></button><button><svg><use href="#moveoff"/></svg></button><button><svg><use href="#rotoff"/></svg></button><button><svg><use href="#editoff"/></svg></button>
    </div>
  </section>
  <section class="group"><i class="grip"></i><div class="tools w1"><button><svg><use href="#metaglobe"/></svg></button></div></section>
  <section class="group"><i class="grip"></i><div class="tools w1"><button><svg><use href="#python"/></svg></button></div></section>
  <section class="group"><i class="grip"></i><div class="tools w1"><button><svg><use href="#help"/></svg></button></div></section>
  <section class="group last"><i class="grip"></i></section>
</div>

<div class="toolbar thick">
  <section class="group last"><i class="grip"></i><div class="tools w1"><button><svg><use href="#plugin"/></svg></button></div></section>
</div>

<main class="work">
  <aside class="dock">
    <section class="panel">
      <header class="paneltitle"><h2>Browser</h2><button aria-label="Float"><svg><use href="#float"/></svg></button><button aria-label="Close"><svg><use href="#closex"/></svg></button></header>
      <div class="paneltools">
        <button><svg><use href="#addlay"/></svg></button><button><svg><use href="#refresh"/></svg></button><button><svg><use href="#funnel"/></svg></button><button><svg><use href="#collapse"/></svg></button><button><svg><use href="#info"/></svg></button>
      </div>
      <div class="treebox">
        <ul class="tree">
          <li><svg><use href="#mssql"/></svg>MS SQL Server</li>
          <li><svg><use href="#oracle"/></svg>Oracle</li>
          <li><svg><use href="#wms"/></svg>WMS/WMTS</li>
          <li><svg><use href="#cube"/></svg>Scenes</li>
          <li><svg><use href="#sensor"/></svg>SensorThings</li>
          <li><svg><use href="#vtiles"/></svg>Vector Tiles</li>
          <li class="open"><button class="toggle"><svg><use href="#arrow"/></svg></button><svg><use href="#xyz"/></svg>XYZ Tiles</li>
          <li class="child"><svg><use href="#xyz"/></svg>Mapzen Global Terrain</li>
          <li class="child hover"><svg><use href="#xyz"/></svg>OpenStreetMap</li>
          <li><svg><use href="#wcs"/></svg>WCS</li>
          <li><svg><use href="#wms"/></svg>WFS / OGC API - Features</li>
        </ul>
        <div class="scroll">
          <button class="up"><svg><use href="#arrow"/></svg></button><i class="thumb"></i><i class="track"></i><i class="thumb small"></i><button class="down"><svg><use href="#arrow"/></svg></button>
        </div>
      </div>
    </section>
    <i class="splitter"></i>
    <section class="panel">
      <header class="paneltitle"><h2>Layers</h2><button aria-label="Float"><svg><use href="#float"/></svg></button><button aria-label="Close"><svg><use href="#closex"/></svg></button></header>
      <div class="paneltools">
        <button><svg><use href="#brush"/></svg></button><button><svg><use href="#group"/></svg></button><button><svg><use href="#eye"/><use href="#arrow" x="16" y="19" width="8" height="5"/></svg></button><button><svg><use href="#funnel"/><use href="#arrow" x="16" y="19" width="8" height="5"/></svg></button><button><svg><use href="#eps"/></svg></button><button class="drop off"><svg><use href="#arrow"/></svg></button><button><svg><use href="#expand"/></svg></button><button><svg><use href="#collapse"/></svg></button><button><svg><use href="#remlay"/></svg></button>
      </div>
      <div class="treebox plain">
        <ul class="tree layers">
          <li><button class="toggle"><svg><use href="#arrow"/></svg></button><input type="checkbox" id="l1" checked><svg><use href="#raster"/></svg><label for="l1" class="active">GeoTIFF</label></li>
          <li class="band"><i class="swatch red"></i>Band 1: Veg_2018 (Gray)</li>
          <li class="band"><i class="swatch green"></i>Band 2: Veg_2020</li>
          <li class="band"><i class="swatch blue"></i>Band 3: Veg_2022</li>
          <li><button class="toggle"><svg><use href="#arrow"/></svg></button><input type="checkbox" id="l2"><svg><use href="#raster"/></svg><label for="l2" class="hidden">OpenStreetMap</label></li>
        </ul>
      </div>
    </section>
  </aside>
  <i class="vsplit"></i>
  <section class="map"><canvas id="map" width="401" height="700"></canvas></section>
</main>

<footer class="status">
  <div class="locator"><svg viewBox="0 0 20 20"><circle cx="8" cy="8" r="7" fill="none" stroke="#888" stroke-width="1.700"/><path d="M13 13l6 6" stroke="#888" stroke-width="2"/></svg><input type="text" aria-label="Locate" placeholder="Type to locate (Ctrl+K)"></div>
  <div class="readouts">
    <label class="coord" for="co">Coordinate</label><span class="field"><input id="co" type="text" value="2668033&nbsp; 4809150"></span>
    <svg class="ext" viewBox="0 0 24 28"><g stroke="#111" stroke-width="1.800" fill="#fff"><ellipse cx="9" cy="8" rx="6" ry="7" transform="rotate(-20 9 8)"/><path d="M6 14l9 11 7-4-8-12z"/><circle cx="14" cy="21" r="6"/></g><path d="M7 3l3 8M10 2l2 8" stroke="#111" stroke-width="2.200"/><circle cx="14" cy="21" r="1.600" fill="#111"/><path d="M15 7l8-6M1 15l4 6" stroke="#111" stroke-width="1.300" stroke-dasharray="2 2"/></svg>
    <label class="scalel" for="sc">Scale</label><span class="combo"><select id="sc"><option>1:1235269</option></select><svg><use href="#arrow"/></svg></span>
    <svg class="lock" viewBox="0 0 20 26"><path d="M5 13V8q0-6 5-6t5 6v5" fill="none" stroke="#999" stroke-width="3"/><rect x="1" y="12" width="18" height="13" rx="1" fill="#666"/></svg>
    <label class="magl" for="mg">Magnifier</label><span class="spin"><input id="mg" type="text" value="100%"><span class="steps"><button><svg><use href="#arrow"/></svg></button><button><svg><use href="#arrow"/></svg></button></span></span>
    <label class="rotl" for="ro">Rotation</label><span class="spin"><input id="ro" type="text" value="0,0 °"><span class="steps"><button><svg><use href="#arrow"/></svg></button><button><svg><use href="#arrow"/></svg></button></span></span>
    <input type="checkbox" id="re" checked><label class="render" for="re">Render</label>
    <button class="crs"><svg viewBox="0 0 24 24"><path d="M8 2h8l6 7-1 7-6 6H9l-6-6-1-7z" fill="#777"/><path d="M12 1v22M1 9h22M2 15h20M8 2q-4 10 1 20M16 2q4 10-1 20" stroke="#eee" fill="none"/></svg>EPSG:31255</button>
    <button class="msg" aria-label="Messages"><svg viewBox="0 0 25 26"><path d="M12 1a11 10 0 0 1 13 10q0 6-5 9l2 6-9-5A11 10 0 0 1 12 1z" fill="#666"/></svg></button>
  </div>
</footer>
<script src="map.js"></script>
</body>
</html>
```
FILE: styles.css
```css
* { box-sizing: border-box; }
html, body { height: 100%; }
body {
  margin: 0;
  display: flex;
  flex-direction: column;
  background: #f0f0f0;
  color: #000;
  font: 17px/27px "Open Sans", "Noto Sans", sans-serif;
  overflow: hidden;
}
button { border: 0; padding: 0; margin: 0; background: none; font: inherit; color: inherit; display: flex; align-items: center; justify-content: center; }
h1, h2 { margin: 0; font-size: inherit; font-weight: 400; }
ul { list-style: none; margin: 0; padding: 0; }
.paints { position: absolute; width: 0; height: 0; }
.symbols { display: none; }

.titlebar { flex: none; height: 34px; display: flex; align-items: center; background: #f3f3f3; padding-left: 2px; }
.logo { width: 24px; height: 24px; }
.title { flex: 1; margin-left: 6px; font-size: 17px; color: #858585; }
.winbtns { display: flex; }
.winbtns button { width: 70px; height: 34px; }
.winbtns button:last-child { width: 56px; margin-left: 7px; }
.winbtns svg { width: 16px; height: 16px; }

.menubar { flex: none; display: flex; height: 31px; border-bottom: 1px solid #f6f6f6; }
.menubar button, .rest { font-size: 17px; line-height: 28px; color: #999; padding: 2px 6px 0 15px; border-bottom: 2px solid #d6d6d6; margin-right: 1px; }
.menubar u { text-underline-offset: 3px; text-decoration-thickness: 1px; }
.rest { flex: 1; margin: 0; }

.toolbar { flex: none; display: flex; height: 58px; background: linear-gradient(#fcfcfc, #efefef); }
.group { display: flex; align-items: center; padding: 0 3px 0 8px; margin-right: 1px; border-bottom: 1px solid #b4b4b4; }
.thick .group { border-bottom-width: 2px; padding-top: 4px; }
.group.last { flex: 1; margin: 0; }
.grip { flex: none; width: 7px; height: 26px; margin-right: 5px; background: radial-gradient(circle, #b0b0b0 0 1px, transparent 1px) 0 0 / 4px 5px; }
.tools { display: flex; }
.tools button { flex: 1; height: 46px; }
.tools svg { width: 36px; height: 36px; overflow: visible; }
.w6 { width: 296px; }
.w16 { width: 792px; }
.combos { width: 271px; }
.attrs { width: 449px; }
.w7 { width: 346px; }
.w13 { width: 680px; }
.w9 { width: 466px; }
.w1 { width: 50px; }
.pressed { background: #dcdcdc; box-shadow: inset 0 0 0 1px #a8a8a8; border-radius: 3px; }
.tools .drop, .paneltools .drop { flex: none; width: 18px; color: #555; }
.tools .drop svg, .paneltools .drop svg { width: 12px; height: 7px; }
.tools .off, .paneltools .off { color: #aaa; }
.sep { width: 12px; margin: 8px 0; background: linear-gradient(90deg, transparent 5px, #d0d0d0 5px 6px, #fff 6px 7px, transparent 7px); }

.letter { font: 16px "Open Sans", sans-serif; fill: #333; }
.native { font: bold 14px "Liberation Sans", sans-serif; fill: #222; }
.tagtext { font: bold 13px "Open Sans", sans-serif; }
.infoi { font: italic bold 28px "Liberation Serif", serif; fill: #fff; }
.infos { font: italic bold 24px "Liberation Serif", serif; fill: #fff; }
.question { font: 25px "Liberation Serif", serif; fill: #fff; }
.eps { font: 24px "Liberation Serif", serif; fill: #bbb; }

.work { flex: 1; min-height: 0; display: flex; }
.dock { flex: none; width: 440px; display: flex; flex-direction: column; }
.panel { flex: 1; min-height: 0; display: flex; flex-direction: column; }
.paneltitle { display: flex; align-items: center; height: 34px; padding: 0 0 0 6px; }
.paneltitle h2 { flex: 1; }
.paneltitle button { width: 21px; height: 20px; }
.paneltitle svg { width: 17px; height: 17px; }
.paneltools { display: flex; height: 43px; padding: 0 0 5px 5px; color: #555; }
.paneltools button { width: 38px; }
.paneltools .drop { width: 15px; }
.paneltools svg { width: 24px; height: 24px; }
.treebox { flex: 1; min-height: 0; display: flex; background: #fff; border: 1px solid #b4b4b4; border-right: 0; overflow: hidden; }
.plain { border-top-color: #fff; }
.tree { flex: 1; overflow: hidden; padding: 1px 0 0 1px; }
.tree li { display: flex; align-items: center; height: 27px; padding-left: 28px; white-space: nowrap; }
.tree li > svg { width: 24px; height: 24px; margin-right: 9px; }
.tree .open { padding-left: 6px; }
.toggle { width: 22px; height: 22px; justify-content: flex-start; color: #555; }
.toggle svg { width: 12px; height: 7px; }
.tree .child { padding-left: 52px; }
.tree .hover { background: #efefef; width: 271px; }
.layers li { padding-left: 9px; }
.layers .toggle { width: 25px; }
.layers li > svg { margin-left: 9px; margin-right: 9px; }
.tree .band { padding-left: 64px; }
.swatch { width: 24px; height: 24px; margin-right: 9px; }
.red { background: #f00; }
.green { background: #0f0; }
.blue { background: #00f; }
.active { font-weight: 700; text-decoration: underline; text-underline-offset: 3px; text-decoration-thickness: 1px; }
.hidden { font-weight: 700; font-style: italic; color: #808080; }
input[type="checkbox"] { appearance: none; width: 21px; height: 21px; margin: 0; background: #fff; border: 1px solid #aaa; display: flex; align-items: center; justify-content: center; }
input[type="checkbox"]:checked::before { content: ""; width: 13px; height: 15px; background: #000; clip-path: polygon(0 52%, 18% 48%, 36% 72%, 84% 0, 100% 4%, 42% 100%, 32% 100%); }

.scroll { width: 21px; display: flex; flex-direction: column; background: linear-gradient(90deg, #f2f2f2, #fff); color: #555; }
.scroll button { height: 20px; }
.scroll svg { width: 12px; height: 7px; }
.up svg { transform: rotate(180deg); }
.thumb { height: 97px; background: #e6e6e6; border: 1px solid #d0d0d0; border-width: 2px 1px; border-color: #b4b4b4 #d0d0d0; }
.small { height: 25px; }
.track { flex: 1; }
.splitter { height: 9px; width: 26px; align-self: center; border-top: 1px dashed #b4b4b4; margin: 5px 0 -5px; }
.vsplit { width: 10px; height: 18px; align-self: center; border-right: 1px dashed #b4b4b4; margin: 0 4px 0 -4px; }
.map { flex: 1; display: flex; align-items: center; justify-content: center; background: #fff; border: 1px solid #b4b4b4; border-right: 0; margin-top: 2px; padding-left: 2px; min-width: 0; }
.map canvas { display: block; }

.status { flex: none; display: flex; align-items: center; justify-content: space-between; height: 43px; padding: 0 0 0 6px; font-size: 16px; line-height: 22px; }
.status input[type="text"] { font: inherit; color: inherit; border: 0; background: none; outline: 0; min-width: 0; }
.status input::placeholder { color: #888; }
.locator { width: 300px; height: 33px; display: flex; align-items: center; background: #fff; border: 1px solid #a8a8a8; border-radius: 3px; padding-left: 13px; }
.locator svg { width: 19px; height: 19px; margin-right: 9px; }
.locator input { flex: 1; padding: 0 2px; }
.readouts { display: flex; align-items: center; }
.coord { width: 84px; }
.field { width: 160px; height: 33px; display: flex; background: #fff; border: 1px solid #a8a8a8; border-radius: 3px; }
.field input { flex: 1; text-align: center; padding: 0 4px 0 0; }
.ext { width: 28px; height: 28px; margin: 0 20px 0 3px; }
.scalel { width: 43px; }
.combo { position: relative; width: 120px; height: 33px; display: flex; }
.combo select { appearance: none; font: inherit; width: 120px; height: 33px; padding: 0 0 0 6px; border: 1px solid #a8a8a8; border-radius: 3px; background: linear-gradient(90deg, #fff 89px, #ccc 89px 90px, #f8f8f8 90px); }
.combo svg { position: absolute; right: 10px; top: 13px; width: 12px; height: 7px; color: #555; }
.lock { width: 20px; height: 26px; margin: 0 12px 0 18px; }
.magl { width: 73px; }
.spin { width: 125px; height: 31px; display: flex; background: #fff; border: 1px solid #a8a8a8; border-radius: 3px; }
.spin input { flex: 1; padding: 0 0 0 6px; }
.steps { width: 21px; border-left: 1px solid #ccc; display: flex; flex-direction: column; background: #f8f8f8; color: #555; }
.steps button { flex: 1; }
.steps svg { width: 11px; height: 6px; }
.steps button:first-child svg { transform: rotate(180deg); }
.rotl { width: 75px; margin-left: 15px; }
.spin + input[type="checkbox"] { margin: 0 8px 0 10px; }
.render { width: 74px; }
.crs svg { width: 24px; height: 24px; margin-right: 2px; }
.crs { width: 116px; justify-content: flex-start; }
.msg { margin-left: 35px; }
.msg svg { width: 25px; height: 26px; }
```
FILE: map.js
```js
// Procedural false-colour vegetation raster drawn into the map canvas.
// Coordinates are in thirds of a canvas pixel.
const OUTLINE = [1050,45,1078,70,1062,90,1075,125,1065,140,1080,150,1070,180,1085,190,1110,172,1162,203,1115,258,1122,290,1105,300,1122,330,1115,375,1105,405,1060,425,1032,430,1075,470,1080,495,1098,517,1085,545,1103,575,1108,620,1132,662,1040,690,950,715,910,718,903,672,875,690,865,725,820,738,783,740,765,710,745,665,670,655,655,632,610,640,570,655,562,680,572,700,530,725,490,765,470,745,465,780,450,797,510,810,555,820,600,850,640,850,670,835,712,860,718,905,700,930,740,935,765,960,745,1000,725,1025,728,1060,715,1100,680,1135,640,1175,575,1180,560,1198,540,1182,510,1185,520,1230,515,1270,540,1300,562,1370,555,1415,520,1425,520,1485,500,1510,540,1525,550,1560,545,1595,610,1575,628,1602,600,1620,595,1645,565,1660,580,1692,628,1712,550,1745,555,1760,590,1765,628,1800,600,1815,520,1805,480,1820,395,1802,383,1880,355,1875,350,1905,325,1920,300,1940,290,1965,240,2020,190,2055,165,2095,140,2090,110,2102,120,2030,145,1980,175,1950,200,1925,218,1850,250,1848,235,1820,210,1770,178,1735,178,1670,192,1650,192,1600,180,1560,160,1510,150,1460,125,1400,105,1340,65,1285,100,1260,125,1220,150,1205,270,1175,290,1150,310,1135,345,1115,370,1050,395,1025,370,1000,350,975,360,905,390,870,405,850,385,815,378,775,335,770,320,740,305,690,305,640,320,620,335,595,360,560,385,535,375,515,350,492,380,470,412,470,412,430,430,390,460,370,505,365,535,385,575,440,630,375,628,345,655,320,690,310,700,290,690,240,735,235,800,205,830,185,850,140,905,135,905,160,960,170,965,190,985,180,1000,110,985,95,955,80,975,62,1008,75,1000,90,1025,95,1030,60];
const ISLET = [275,588,312,585,316,616,277,615];
const LAKE = [760,385,830,350,858,360,860,430,835,475,800,540,772,590,766,660,790,705,830,705,845,735,783,740,765,710,745,665,722,640,722,560,740,500,745,440];
// x, y, red, green, blue, share of dark speckle
const ZONES = [[1050,80,150,140,110,.8],[1040,140,150,150,110,.8],[1020,200,190,130,120,.4],[1110,200,150,120,120,.8],[980,75,100,130,110,.8],[880,150,120,100,115,.85],[880,200,100,150,120,.75],[870,290,110,165,115,.7],[950,220,105,150,120,.75],[970,290,150,160,110,.65],[1070,260,220,165,155,.35],[1050,225,170,130,130,.65],[1080,310,170,165,125,.6],[1060,370,205,165,145,.5],[960,350,140,105,115,.75],[1090,390,120,130,90,.7],[1000,340,170,150,110,.65],[760,270,225,210,190,.06],[700,290,225,205,205,.06],[720,248,190,200,160,.5],[740,330,165,200,95,.5],[660,360,228,195,190,.05],[600,430,225,175,165,.06],[670,400,180,190,100,.45],[700,440,205,125,115,.06],[710,500,185,125,118,.08],[730,410,200,90,80,.2],[800,345,180,125,130,.1],[870,400,190,150,150,.3],[920,430,140,130,120,.7],[1000,480,150,130,140,.65],[1040,500,170,150,150,.6],[860,520,180,155,135,.55],[930,520,140,125,130,.7],[900,600,175,145,135,.6],[850,580,200,160,145,.5],[1000,590,120,120,110,.75],[1060,560,110,120,110,.75],[1000,670,140,140,110,.7],[1090,640,225,185,140,.2],[830,650,210,165,145,.45],[690,610,190,160,110,.5],[600,630,230,150,145,.08],[650,560,190,155,95,.5],[630,480,150,160,80,.6],[540,540,120,140,80,.7],[500,450,208,178,192,.05],[550,460,215,170,180,.06],[480,490,190,160,175,.15],[470,390,110,100,120,.85],[430,430,110,110,110,.85],[400,520,110,120,80,.8],[390,590,110,125,95,.75],[470,600,130,140,85,.7],[540,640,120,130,85,.7],[500,690,215,175,155,.3],[430,680,150,165,115,.6],[330,680,208,238,222,.05],[370,750,212,238,232,.05],[430,760,225,212,230,.1],[540,700,130,120,100,.7],[490,745,130,130,90,.7],[470,830,238,203,213,.06],[560,840,225,185,175,.25],[660,870,110,120,110,.75],[540,900,125,145,95,.6],[440,900,150,150,110,.6],[390,930,240,205,215,.08],[370,970,230,225,190,.2],[450,980,130,140,100,.6],[530,970,235,190,190,.25],[620,1000,110,110,110,.7],[720,960,100,120,120,.8],[650,940,215,170,165,.35],[700,1040,210,160,155,.3],[620,1110,130,115,85,.7],[700,1080,120,120,80,.7],[430,1030,140,130,110,.6],[470,1075,228,218,222,.1],[390,1110,225,200,215,.25],[530,1140,232,200,205,.12],[600,1165,225,170,150,.25],[330,1140,210,190,200,.35],[220,1200,200,218,205,.35],[110,1270,210,245,235,.2],[180,1320,208,238,232,.3],[130,1360,130,165,120,.6],[260,1240,180,200,170,.5],[330,1200,200,205,190,.4],[440,1240,215,215,200,.15],[480,1290,225,190,185,.12],[330,1290,190,195,190,.5],[250,1370,140,140,120,.6],[210,1430,222,218,232,.2],[400,1350,150,155,155,.55],[500,1370,80,120,85,.8],[460,1380,125,115,165,.6],[330,1430,150,135,130,.55],[420,1480,145,135,120,.55],[280,1480,228,208,215,.3],[350,1540,236,205,208,.3],[240,1560,210,205,190,.45],[165,1500,170,160,170,.5],[460,1540,236,203,208,.25],[480,1640,228,190,190,.2],[540,1540,130,110,80,.7],[580,1600,120,105,120,.65],[600,1705,110,125,80,.7],[590,1780,110,115,85,.65],[340,1620,140,160,120,.5],[240,1640,228,225,205,.4],[420,1690,150,155,120,.5],[520,1690,232,203,212,.3],[280,1740,236,232,205,.35],[260,1795,238,232,200,.3],[220,1790,120,90,90,.7],[185,1710,120,90,85,.65],[330,1840,120,90,95,.75],[360,1865,90,80,100,.85],[350,1770,215,190,190,.4],[440,1780,218,188,200,.4],[270,1880,220,208,226,.3],[270,1925,120,100,110,.7],[200,1945,115,95,115,.65],[180,2000,208,195,222,.25],[240,1990,222,226,236,.2],[130,2080,190,160,190,.4],[295,600,110,120,90,.85]];

const canvas = document.getElementById('map');
const ctx = canvas.getContext('2d');
const W = canvas.width, H = canvas.height;

function mask(polygons) {
  const c = document.createElement('canvas');
  c.width = W; c.height = H;
  const g = c.getContext('2d');
  for (const p of polygons) {
    g.beginPath();
    for (let i = 0; i < p.length; i += 2) g.lineTo(p[i] / 3 - 1, p[i + 1] / 3 - 13);
    g.fill();
  }
  return g.getImageData(0, 0, W, H).data;
}
function hash(x, y, s) {
  let h = Math.imul(x, 374761393) + Math.imul(y, 668265263) + Math.imul(s, 1274126177);
  h = Math.imul(h ^ (h >>> 13), 1274126177);
  return ((h ^ (h >>> 16)) >>> 0) / 4294967296;
}
function smooth(x, y, size, s) {
  const fx = x / size, fy = y / size, ix = Math.floor(fx), iy = Math.floor(fy);
  let u = fx - ix, v = fy - iy;
  u = u * u * (3 - 2 * u); v = v * v * (3 - 2 * v);
  const a = hash(ix, iy, s), b = hash(ix + 1, iy, s), c = hash(ix, iy + 1, s), d = hash(ix + 1, iy + 1, s);
  return a + (b - a) * u + (c - a) * v + (a - b - c + d) * u * v;
}
const land = mask([OUTLINE, ISLET]), lake = mask([LAKE]);
const img = ctx.createImageData(W, H);
for (let y = 0; y < H; y++) for (let x = 0; x < W; x++) {
  const jx = Math.round(x + (smooth(x, y, 3, 1) - .5) * 4), jy = Math.round(y + (smooth(x, y, 3, 2) - .5) * 4);
  if (jx < 0 || jy < 0 || jx >= W || jy >= H) continue;
  if (land[(jy * W + jx) * 4 + 3] < 128) continue;
  const o = (y * W + x) * 4;
  img.data[o + 3] = 255;
  const kx = Math.round(x + (smooth(x, y, 3, 3) - .5) * 3);
  if (lake[(y * W + kx) * 4 + 3] > 128) continue;
  const px = (x + 1) * 3 + (smooth(x, y, 13, 4) - .5) * 60 + (smooth(x, y, 4, 14) - .5) * 60;
  const py = (y + 13) * 3 + (smooth(x, y, 13, 5) - .5) * 60 + (smooth(x, y, 4, 15) - .5) * 60;
  let sum = 0, r = 0, g = 0, b = 0, d = 0;
  for (const z of ZONES) {
    const q = (px - z[0]) ** 2 + (py - z[1]) ** 2 + 120, w = 1 / (q * Math.sqrt(q));
    sum += w; r += z[2] * w; g += z[3] * w; b += z[4] * w; d += z[5] * w;
  }
  r /= sum; g /= sum; b /= sum; d /= sum;
  // patches of denser cover, about ten pixels across
  d += (smooth(x, y, 9, 16) - .5) * .5 * (d > .15 ? 1 : .2);
  const n = smooth(x, y, 2, 6) * .45 + smooth(x, y, 5, 7) * .3 + hash(x, y, 8) * .25;
  const t = .44 + (d - .5) * .5;
  let k = 1.05, spread = 28;
  if (n < t) { k = n < t - .22 ? .45 : .74; spread = 50; }
  else if (d > .45) { k = 1.1; spread = 48; }
  if (d > .5 && hash(x, y, 12) < .03) k = .1;
  img.data[o] = r * k + (smooth(x, y, 2, 9) - .5) * spread * 1.4;
  img.data[o + 1] = g * k + (smooth(x, y, 2, 10) - .5) * spread * 1.4;
  img.data[o + 2] = b * k + (smooth(x, y, 2, 11) - .5) * spread * 1.4;
}
ctx.putImageData(img, 0, 0);
```
